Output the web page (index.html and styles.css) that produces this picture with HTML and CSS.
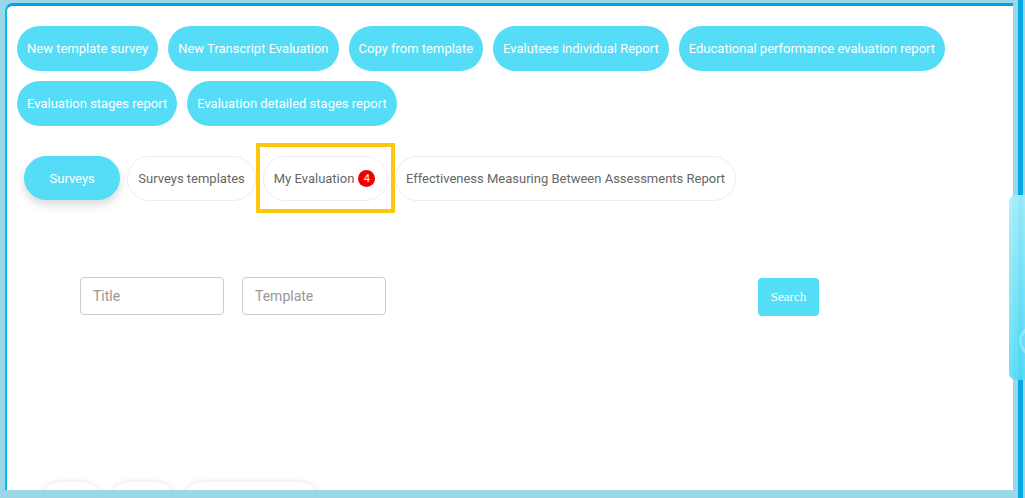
FILE: index.html
```html
<!DOCTYPE html>
<html lang="en">
<head>
  <meta charset="UTF-8" />
  <title>Surveys</title>
  <link rel="stylesheet" href="styles.css">
</head>
<body>
  <div class="frame">
    <div class="panel">

      <div class="actions">
        <button class="action-btn">New template survey</button>
        <button class="action-btn">New Transcript Evaluation</button>
        <button class="action-btn">Copy from template</button>
        <button class="action-btn">Evalutees individual Report</button>
        <button class="action-btn">Educational performance evaluation report</button>
        <button class="action-btn">Evaluation stages report</button>
        <button class="action-btn">Evaluation detailed stages report</button>
      </div>

      <!-- tabs -->
      <div class="tabs">
        <span class="tab active">Surveys</span>
        <span class="tab">Surveys templates</span>
        <span class="tab highlight">My Evaluation <span class="badge">4</span></span>
        <span class="tab">Effectiveness Measuring Between Assessments Report</span>
      </div>

      <div class="filters">
        <input type="text" placeholder="Title" />
        <input type="text" placeholder="Template" />
        <button class="search-btn">Search</button>
      </div>

      <div class="chips">
        <span class="chip chip-sm"></span>
        <span class="chip chip-md"></span>
        <span class="chip chip-lg"></span>
      </div>

    </div>
    <div class="edge"></div>
    <div class="side-tab"><span class="side-circle"></span></div>
  </div>
</body>
</html>
```

FILE: styles.css
```css
body, html {
  margin: 0;
  padding: 0;
  height: 100%;
  overflow: hidden;
  background-color: #9ad8e9;
  font-family: Roboto, 'Liberation Sans', sans-serif;
}

.frame {
  display: flex;
  height: 498px;
  position: relative;
}

.panel {
  margin: 3px 5px 5px 5px;
  width: 1008px;
  height: 487px;
  background-color: #fff;
  border-top: 3px solid #0a9fdc;
  border-left: 2px solid #00bff0;
  border-top-left-radius: 8px;
  padding: 20px 10px 0 10px;
  box-sizing: border-box;
  overflow: hidden;
}

.edge {
  width: 5px;
  background-color: #04a8e2;
}

.actions {
  display: flex;
  flex-wrap: wrap;
  gap: 10px;
}

.action-btn {
  height: 45px;
  padding: 0 10px;
  border: none;
  border-radius: 23px;
  background-color: #55dcf6;
  color: #fff;
  font-family: Roboto, sans-serif;
  font-size: 13px;
  cursor: pointer;
}

.tabs {
  display: flex;
  gap: 7px;
  margin-top: 30px;
  padding-left: 7px;
}

.tab {
  display: flex;
  align-items: center;
  height: 45px;
  padding: 0 10px;
  border: 1px solid #ececec;
  border-radius: 23px;
  box-sizing: border-box;
  color: #666;
  font-size: 13px;
  background-color: #fff;
}

.tab.active {
  padding: 0 24.5px;
  height: 44px;
  border-color: #55dcf6;
  background-color: #55dcf6;
  color: #fff;
  box-shadow: 0 5px 10px rgba(0, 0, 0, 0.15);
}

.tab.highlight {
  position: relative;
  padding-right: 11.5px;
}

.tab.highlight::after {
  content: "";
  position: absolute;
  top: -14px;
  bottom: -13px;
  left: -8px;
  right: -8px;
  border: 4px solid #fdc80c;
}

.badge {
  display: inline-flex;
  align-items: center;
  justify-content: center;
  width: 17px;
  height: 17px;
  margin-left: 4px;
  border-radius: 50%;
  background-color: #f20000;
  color: #fff;
  font-size: 11px;
}

.filters {
  display: flex;
  align-items: center;
  gap: 18px;
  margin-top: 75px;
  padding-left: 63px;
}

input {
  width: 144px;
  height: 38px;
  padding: 0 12px;
  box-sizing: border-box;
  border: 1px solid #ccc;
  border-radius: 4px;
  font-family: Roboto, sans-serif;
  font-size: 14px;
  color: #555;
}

input::placeholder {
  color: #999;
}

.search-btn {
  margin-left: 354px;
  margin-top: 2px;
  width: 61px;
  height: 38px;
  border: none;
  border-radius: 4px;
  background-color: #55dff7;
  color: #fff;
  font-family: 'Liberation Serif', serif;
  font-size: 13px;
}

.chips {
  display: flex;
  gap: 7px;
  margin-top: 166px;
  padding-left: 23px;
}

.chip {
  height: 40px;
  border-radius: 20px;
  background-color: #fff;
  box-shadow: 0 0 6px rgba(0, 0, 0, 0.12);
}

.chip-sm { width: 62px; }
.chip-md { width: 67px; }
.chip-lg { width: 137px; }

.side-tab {
  position: absolute;
  right: 0;
  top: 195px;
  width: 16px;
  height: 185px;
  border-radius: 7px 0 0 7px;
  background: linear-gradient(to bottom, #a6eefa, #55ddf6);
  opacity: 0.9;
  overflow: hidden;
}

.side-circle {
  position: absolute;
  left: 10px;
  top: 130px;
  width: 26px;
  height: 26px;
  border-radius: 50%;
  border: 3px solid rgba(255, 255, 255, 0.35);
}
```
